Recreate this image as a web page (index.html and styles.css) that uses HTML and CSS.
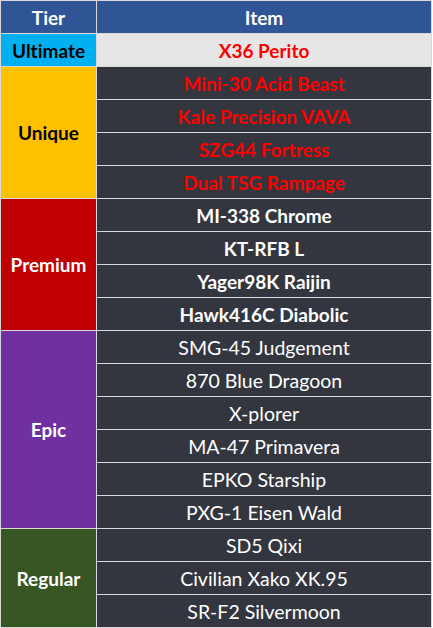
FILE: index.html
```html
<!DOCTYPE html>
<html>
<head>
<meta charset="utf-8">
<link rel="stylesheet" href="styles.css">
</head>
<body>
<div class="sheet">
<table class="tiers">
  <thead>
    <tr><th class="col-tier">Tier</th><th class="col-item">Item</th></tr>
  </thead>
  <tbody>
    <tr><td class="tier ultimate">Ultimate</td><td class="item light red">X36 Perito</td></tr>
    <tr><td class="tier unique" rowspan="4">Unique</td><td class="item red">Mini-30 Acid Beast</td></tr>
    <tr><td class="item red">Kale Precision VAVA</td></tr>
    <tr><td class="item red">SZG44 Fortress</td></tr>
    <tr><td class="item red">Dual TSG Rampage</td></tr>
    <tr><td class="tier premium" rowspan="4">Premium</td><td class="item bold">MI-338 Chrome</td></tr>
    <tr><td class="item bold">KT-RFB L</td></tr>
    <tr><td class="item bold">Yager98K Raijin</td></tr>
    <tr><td class="item bold">Hawk416C Diabolic</td></tr>
    <tr><td class="tier epic" rowspan="6">Epic</td><td class="item">SMG-45 Judgement</td></tr>
    <tr><td class="item">870 Blue Dragoon</td></tr>
    <tr><td class="item">X-plorer</td></tr>
    <tr><td class="item">MA-47 Primavera</td></tr>
    <tr><td class="item">EPKO Starship</td></tr>
    <tr><td class="item">PXG-1 Eisen Wald</td></tr>
    <tr><td class="tier regular" rowspan="3">Regular</td><td class="item">SD5 Qixi</td></tr>
    <tr><td class="item">Civilian Xako XK.95</td></tr>
    <tr><td class="item">SR-F2 Silvermoon</td></tr>
  </tbody>
</table>
</div>
</body>
</html>
```
FILE: styles.css
```css
html, body {
  margin: 0;
  padding: 0;
  background: #ffffff;
}
.sheet {
  display: flex;
  width: 433px;
}
.tiers {
  border-collapse: collapse;
  width: 432px;
  table-layout: fixed;
  font-family: Lato, "Liberation Sans", sans-serif;
  font-size: 19px;
  font-variant-ligatures: none;
  border-right: 1px solid #2b2d33;
}
.tiers th, .tiers td {
  border: 1px solid #d9d9d9;
  height: 32px;
  padding: 0;
  text-align: center;
  vertical-align: middle;
  box-sizing: border-box;
  white-space: nowrap;
}
.tiers tr {
  height: 33px;
}
.col-tier { width: 96px; }
.tiers th {
  background: #2f5597;
  color: #ffffff;
  font-weight: 700;
}
.tier {
  font-weight: 700;
  color: #ffffff;
}
.ultimate { background: #00b0f0; color: #000000; }
.unique { background: #ffc000; color: #000000; }
.premium { background: #c00000; }
.epic { background: #7030a0; }
.regular { background: #375623; }
.item {
  background: #33363f;
  color: #ffffff;
  font-size: 19.5px;
}
.item.light { background: #e7e6e6; }
.item.red { color: #ff0000; font-weight: 700; font-size: 19px; }
.item.bold { font-weight: 700; font-size: 19px; }
```
